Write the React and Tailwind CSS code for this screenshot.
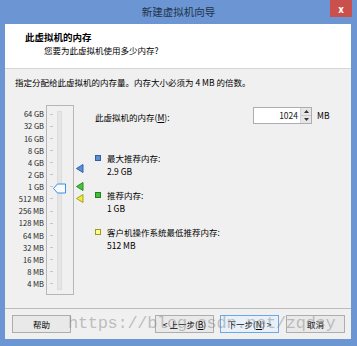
import React from "react";

const scale = ["64 GB", "32 GB", "16 GB", "8 GB", "4 GB", "2 GB", "1 GB", "512 MB", "256 MB", "128 MB", "64 MB", "32 MB", "16 MB", "8 MB", "4 MB"];

const Marker = ({ top, fill, stroke }) => (
  <svg className="absolute left-0" style={{ top }} width="8" height="9" viewBox="0 0 8 9">
    <polygon points="7,0.5 7,8.5 0.5,4.5" fill={fill} stroke={stroke} strokeWidth="1" />
  </svg>
);

const Legend = ({ swatch, label, value, className }) => (
  <div className={className}>
    <div className="flex items-center h-[12px]">
      <span className={`w-[6px] h-[6px] border ${swatch}`} />
      <span className="ml-[6px]">{label}</span>
    </div>
    <div className="pl-[12px] leading-[12px] mt-[1px]">{value}</div>
  </div>
);

const Button = ({ children, primary, className = "" }) => (
  <button
    className={`h-[18px] w-[59px] border text-[8.5px] leading-none flex items-center justify-center ${
      primary ? "border-[#6aa8e8] bg-[#e8f1fa]" : "border-[#adadad] bg-[#e9e9e9]"
    } ${className}`}
  >
    {children}
  </button>
);

export default function App() {
  return (
    <div className="relative w-[357px] h-[346px] bg-[#6b96d3] overflow-hidden font-['Noto_Sans_CJK_SC',sans-serif] text-[8.5px] text-black">
      {/* title bar */}
      <div className="relative h-[24px] flex items-center justify-center">
        <span className="text-[10.5px] text-[#22324a]">新建虚拟机向导</span>
        <div className="absolute right-[5px] top-0 w-[22px] h-[17px] bg-[#c9504c] flex items-center justify-center text-white text-[10px] font-bold leading-none">
          x
        </div>
      </div>

      <div className="ml-[5px] w-[346px] h-[315px] bg-[#f0f0f0] flex flex-col">
        {/* header */}
        <div className="h-[45px] bg-white border-b border-[#d6d6d6] pl-[20px] pt-[7px]">
          <div className="font-bold text-[9.5px] leading-[12px]">此虚拟机的内存</div>
          <div className="pl-[19px] mt-[1px] leading-[12px]">您要为此虚拟机使用多少内存?</div>
        </div>

        {/* body */}
        <div className="flex-1 flex flex-col">
          <div className="pl-[10px] pt-[7px] leading-[12px]">指定分配给此虚拟机的内存量。内存大小必须为 4 MB 的倍数。</div>

          <div className="flex mt-[17px]">
            {/* scale labels */}
            <div className="w-[39px] pt-[3px] flex flex-col items-end text-[7.5px] text-[#222]">
              {scale.map((s) => (
                <div key={s} className="h-[12.14px] flex items-center leading-none">{s}</div>
              ))}
            </div>

            {/* slider box */}
            <div className="relative ml-[2px] w-[28px] h-[190px] border border-[#b6b6b6] pt-[2px] pl-[3px]">
              {scale.map((s) => (
                <div key={s} className="h-[12.14px] flex items-center">
                  <span className="w-[3px] h-[1px] bg-[#c6c6c6]" />
                </div>
              ))}
              <div className="absolute left-[10px] top-[5px] w-[5px] h-[179px] bg-[#e5e5e5] border border-[#dcdcdc]" />
              <svg className="absolute left-[6px] top-[77px]" width="14" height="11" viewBox="0 0 14 11">
                <path d="M0.5 5.5 L4.5 1 H12.5 V10 H4.5 Z" fill="#f7fbff" stroke="#3d8ee2" strokeWidth="1" />
              </svg>
            </div>

            {/* markers */}
            <div className="relative ml-[2px] w-[8px] h-[190px]">
              <Marker top={59} fill="#5a8fd8" stroke="#2d62ac" />
              <Marker top={77} fill="#49c43c" stroke="#268a1f" />
              <Marker top={89} fill="#ecec3a" stroke="#a7a021" />
            </div>

            {/* right column */}
            <div className="ml-[11px] w-[234px]">
              <div className="mt-[2px] h-[17px] flex items-center">
                <span className="flex-1 pt-[3px]">
                  此虚拟机的内存(<span className="underline">M</span>):
                </span>
                <div className="w-[59px] h-[17px] border border-[#abadb3] bg-white flex">
                  <div className="flex-1 text-right pr-[2px] flex items-center justify-end text-[8.5px] text-[#222]">1024</div>
                  <div className="w-[11px] flex flex-col border-l border-[#d4d4d4] bg-[#e6e6e6]">
                    <div className="flex-1 flex items-center justify-center border-b border-[#c8c8c8]">
                      <svg width="5" height="3" viewBox="0 0 5 3"><polygon points="2.5,0 5,3 0,3" fill="#333" /></svg>
                    </div>
                    <div className="flex-1 flex items-center justify-center">
                      <svg width="5" height="3" viewBox="0 0 5 3"><polygon points="0,0 5,0 2.5,3" fill="#333" /></svg>
                    </div>
                  </div>
                </div>
                <span className="ml-[5px] w-[12px]">MB</span>
              </div>

              <Legend
                className="mt-[28px]"
                swatch="bg-[#5b8ed3] border-[#34609f]"
                label="最大推荐内存:"
                value="2.9 GB"
              />
              <Legend
                className="mt-[12px]"
                swatch="bg-[#40c03a] border-[#23801e]"
                label="推荐内存:"
                value="1 GB"
              />
              <Legend
                className="mt-[12px]"
                swatch="bg-[#ffff86] border-[#9c9820]"
                label="客户机操作系统最低推荐内存:"
                value="512 MB"
              />
            </div>
          </div>

          {/* footer */}
          <div className="mt-auto h-[31px] border-t border-[#bdbdbd] flex items-center pl-[7px] pr-[6px] pt-[6px] pb-[6px]">
            <Button>帮助</Button>
            <Button className="ml-auto">
              &lt; 上一步(<span className="underline">B</span>)
            </Button>
            <Button primary className="ml-[6px]">
              下一步(<span className="underline">N</span>) &gt;
            </Button>
            <Button className="ml-[7px]">取消</Button>
          </div>
        </div>
      </div>

      {/* watermark */}
      <div className="pointer-events-none absolute left-[68px] top-[314px] font-['Liberation_Mono',monospace] text-[17px] tracking-[-0.3px] leading-[20px] text-[#8a8a8a]/50 whitespace-nowrap">
        https://blog.csdn.net/zqdsy
      </div>
    </div>
  );
}
